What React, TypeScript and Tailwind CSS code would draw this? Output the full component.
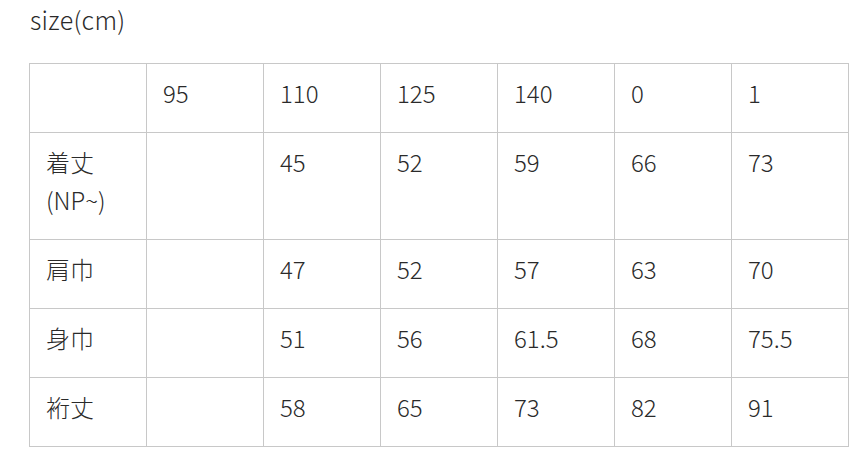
const header = ['', '95', '110', '125', '140', '0', '1'];

const rows: { label: string[]; values: string[] }[] = [
  { label: ['着丈', '(NP~)'], values: ['', '45', '52', '59', '66', '73'] },
  { label: ['肩巾'], values: ['', '47', '52', '57', '63', '70'] },
  { label: ['身巾'], values: ['', '51', '56', '61.5', '68', '75.5'] },
  { label: ['裄丈'], values: ['', '58', '65', '73', '82', '91'] },
];

const cell = 'border border-[#c8c8c8] pl-4 pr-2 pt-[10px] pb-[20px] align-top text-left font-light';

export default function App() {
  return (
    <div
      className="min-h-screen bg-white pl-[30px] text-[24px] leading-[38px] text-[#2a2a2a]"
      style={{ fontFamily: '"Noto Sans CJK JP", "Noto Sans", sans-serif' }}
    >
      <p className="font-light text-[25px] tracking-[0.3px]">size(cm)</p>
      <table className="mt-[25px] -ml-px w-[820px] table-fixed border-collapse">
        <thead>
          <tr>
            {header.map((h, i) => (
              <th key={i} className={cell}>
                {h}
              </th>
            ))}
          </tr>
        </thead>
        <tbody>
          {rows.map((r) => (
            <tr key={r.label[0]}>
              <td className={cell}>
                {r.label.map((l) => (
                  <div key={l}>{l}</div>
                ))}
              </td>
              {r.values.map((v, i) => (
                <td key={i} className={cell}>
                  {v}
                </td>
              ))}
            </tr>
          ))}
        </tbody>
      </table>
    </div>
  );
}
